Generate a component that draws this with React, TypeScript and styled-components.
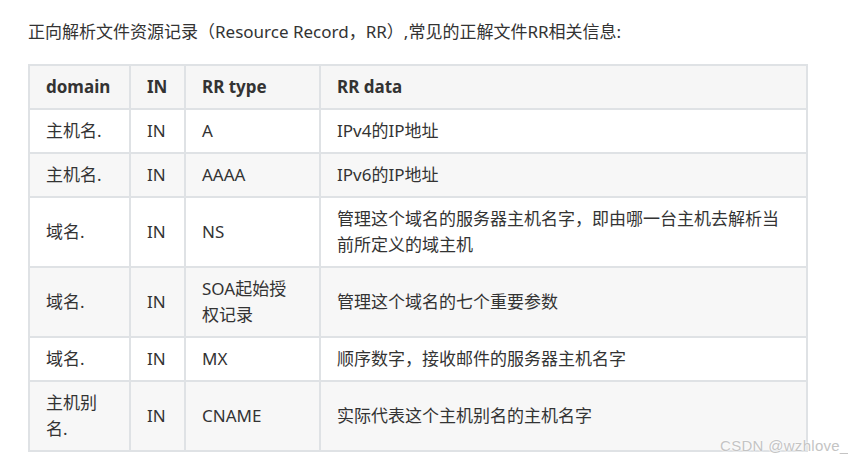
import React from 'react';
import styled, { createGlobalStyle } from 'styled-components';

const GlobalStyle = createGlobalStyle`
  html, body {
    margin: 0;
    padding: 0;
    background: #fff;
  }
  body {
    font-family: "Noto Sans", "Noto Sans CJK SC", sans-serif;
    color: #333;
  }
`;

const Page = styled.div`
  position: relative;
  width: 848px;
  height: 463px;
  padding: 19px 40px 0 28px;
  box-sizing: border-box;
`;

const Intro = styled.p`
  margin: 0 0 19px;
  font-size: 17px;
  line-height: 26px;
  color: #333;
  white-space: nowrap;
`;

const Table = styled.table`
  border-collapse: collapse;
  table-layout: fixed;
  width: 780px;
  border: 2px solid #dfe2e5;
  font-size: 17px;
  line-height: 26px;
`;

const HeadRow = styled.tr`
  background: #f6f6f6;
`;

const Row = styled.tr<{ $shade: boolean }>`
  background: ${(p) => (p.$shade ? '#f7f7f7' : '#fff')};
`;

const Th = styled.th`
  padding: 8px 16px;
  border: 2px solid #dfe2e5;
  text-align: left;
  font-weight: 700;
  color: #333;
`;

const Td = styled.td`
  padding: 8px 16px;
  border: 2px solid #dfe2e5;
  color: #333;
  vertical-align: middle;
`;

const Watermark = styled.div`
  position: absolute;
  left: 720px;
  top: 437px;
  font-family: "Liberation Sans", Arial, sans-serif;
  font-size: 15px;
  color: #c4c4c4;
  text-shadow: 0 0 2px #fff, 0 0 2px #fff;
  letter-spacing: 0.3px;
  white-space: nowrap;
`;

const rows: [string, string, string, string][] = [
  ['主机名.', 'IN', 'A', 'IPv4的IP地址'],
  ['主机名.', 'IN', 'AAAA', 'IPv6的IP地址'],
  ['域名.', 'IN', 'NS', '管理这个域名的服务器主机名字，即由哪一台主机去解析当前所定义的域主机'],
  ['域名.', 'IN', 'SOA起始授权记录', '管理这个域名的七个重要参数'],
  ['域名.', 'IN', 'MX', '顺序数字，接收邮件的服务器主机名字'],
  ['主机别名.', 'IN', 'CNAME', '实际代表这个主机别名的主机名字'],
];

export default function App() {
  return (
    <>
      <GlobalStyle />
      <Page>
        <Intro>正向解析文件资源记录（Resource Record，RR）,常见的正解文件RR相关信息:</Intro>
        <Table>
          <colgroup>
            <col style={{ width: 101 }} />
            <col style={{ width: 55 }} />
            <col style={{ width: 135 }} />
            <col />
          </colgroup>
          <thead>
            <HeadRow>
              <Th>domain</Th>
              <Th>IN</Th>
              <Th>RR type</Th>
              <Th>RR data</Th>
            </HeadRow>
          </thead>
          <tbody>
            {rows.map((r, i) => (
              <Row key={i} $shade={i % 2 === 1}>
                {r.map((c, j) => (
                  <Td key={j}>{c}</Td>
                ))}
              </Row>
            ))}
          </tbody>
        </Table>
        <Watermark>CSDN @wzhlove_</Watermark>
      </Page>
    </>
  );
}
